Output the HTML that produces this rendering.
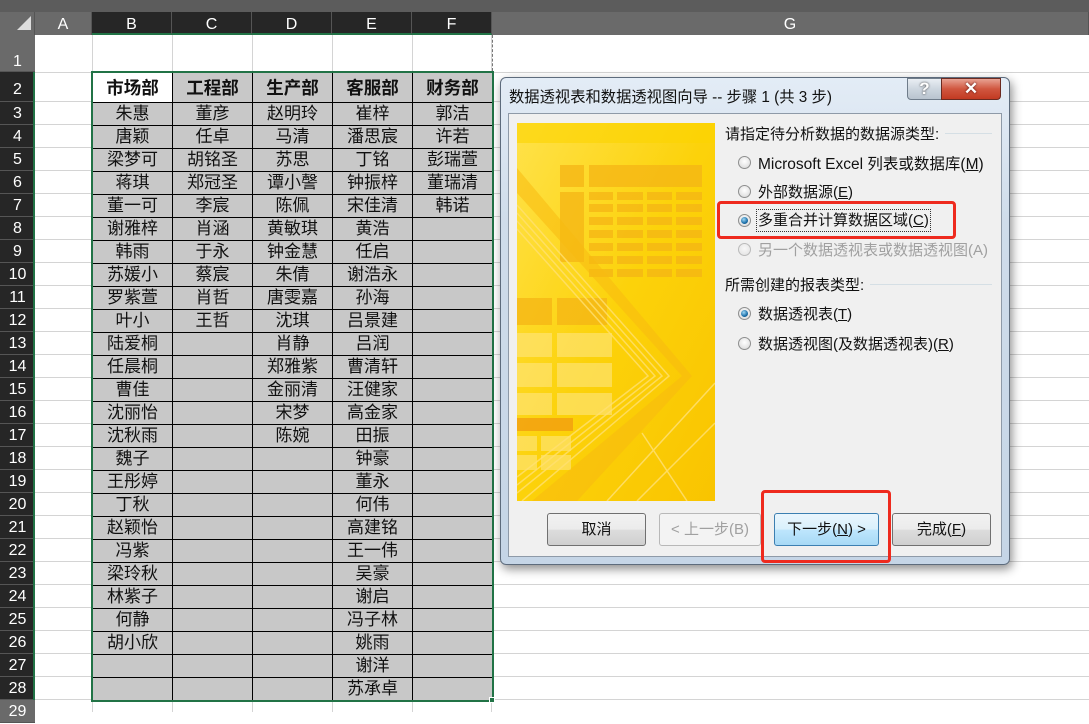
<!DOCTYPE html>
<html><head><meta charset="utf-8">
<style>
*{margin:0;padding:0;box-sizing:border-box}
body{width:1089px;height:712px;overflow:hidden;background:#fff;position:relative;font-family:"Liberation Sans","Noto Sans CJK SC",sans-serif}
.a{position:absolute}
.ch{position:absolute;top:12px;height:23px;color:#fff;font-size:16px;text-align:center;line-height:26px;border-right:1px solid #555}
.rh{position:absolute;left:0;width:35px;color:#fff;font-size:16px;text-align:center;border-bottom:1px solid #555}
.vl{position:absolute;top:35px;bottom:0;width:1px;background:#d4d4d4}
table.d{position:absolute;left:92px;top:72px;width:400px;border-collapse:collapse;table-layout:fixed;font-size:17px;font-family:"Liberation Sans","Noto Sans CJK SC",sans-serif}
table.d td{border:1px solid #000;background:#c8c8c8;text-align:center;height:23px;padding:0;line-height:20px;color:#111;overflow:hidden;white-space:nowrap}
table.d tr.h td{height:30px;font-weight:bold;font-size:17.5px;line-height:28px}
.dl{font-size:15px;color:#111;white-space:nowrap}
.rad{position:absolute;width:13px;height:13px;border-radius:50%;border:1px solid #8e8f8f;background:radial-gradient(circle at 50% 40%,#fff,#e6e6e6 60%,#cfcfcf)}
.rad.on::after{content:"";position:absolute;left:2px;top:2px;width:7px;height:7px;border-radius:50%;background:radial-gradient(circle at 40% 35%,#9fd8f5,#1a6ea8 60%,#0b3e66)}
.btn{position:absolute;top:513px;height:33px;border:1px solid #707070;border-radius:3px;background:linear-gradient(#f2f2f2,#ebebeb 50%,#dddddd 51%,#cfcfcf);font-size:15px;text-align:center;line-height:31px;color:#111}
</style></head><body>
<div class="a" style="left:0;top:0;width:1089px;height:12px;background:#5c5c5c"></div>
<div class="a" style="left:0;top:12px;width:1089px;height:23px;background:#6a6a6a"></div>
<div class="a" style="left:0;top:12px;width:35px;height:23px;background:#6a6a6a;border-right:1px solid #555"></div>
<div class="a" style="left:17px;top:16px;width:0;height:0;border-left:14px solid transparent;border-bottom:14px solid #ddd"></div>
<div class="ch" style="left:35px;width:57px;background:#6a6a6a">A</div>
<div class="ch" style="left:92px;width:80px;background:#262626;border-bottom:2px solid #217346">B</div>
<div class="ch" style="left:172px;width:80px;background:#262626;border-bottom:2px solid #217346">C</div>
<div class="ch" style="left:252px;width:80px;background:#262626;border-bottom:2px solid #217346">D</div>
<div class="ch" style="left:332px;width:80px;background:#262626;border-bottom:2px solid #217346">E</div>
<div class="ch" style="left:412px;width:80px;background:#262626;border-bottom:2px solid #217346">F</div>
<div class="ch" style="left:492px;width:597px;background:#6a6a6a">G</div>
<div class="a" style="left:35px;top:72px;width:1054px;height:1px;background:#d4d4d4"></div>
<div class="a" style="left:35px;top:101px;width:1054px;height:611px;background:repeating-linear-gradient(to bottom,#d4d4d4 0 1px,transparent 1px 23px)"></div>
<div class="vl" style="left:92px"></div><div class="vl" style="left:172px"></div><div class="vl" style="left:252px"></div><div class="vl" style="left:332px"></div><div class="vl" style="left:412px"></div><div class="vl" style="left:491px"></div>
<div class="a" style="left:0;top:35px;width:35px;height:677px;background:#6a6a6a"></div>
<div class="rh" style="top:35px;height:37px;background:#6a6a6a;line-height:54px">1</div>
<div class="rh" style="top:72px;height:30px;background:#262626;line-height:36px">2</div>
<div class="rh" style="top:102px;height:23px;background:#262626;line-height:24px">3</div>
<div class="rh" style="top:125px;height:23px;background:#262626;line-height:24px">4</div>
<div class="rh" style="top:148px;height:23px;background:#262626;line-height:24px">5</div>
<div class="rh" style="top:171px;height:23px;background:#262626;line-height:24px">6</div>
<div class="rh" style="top:194px;height:23px;background:#262626;line-height:24px">7</div>
<div class="rh" style="top:217px;height:23px;background:#262626;line-height:24px">8</div>
<div class="rh" style="top:240px;height:23px;background:#262626;line-height:24px">9</div>
<div class="rh" style="top:263px;height:23px;background:#262626;line-height:24px">10</div>
<div class="rh" style="top:286px;height:23px;background:#262626;line-height:24px">11</div>
<div class="rh" style="top:309px;height:23px;background:#262626;line-height:24px">12</div>
<div class="rh" style="top:332px;height:23px;background:#262626;line-height:24px">13</div>
<div class="rh" style="top:355px;height:23px;background:#262626;line-height:24px">14</div>
<div class="rh" style="top:378px;height:23px;background:#262626;line-height:24px">15</div>
<div class="rh" style="top:401px;height:23px;background:#262626;line-height:24px">16</div>
<div class="rh" style="top:424px;height:23px;background:#262626;line-height:24px">17</div>
<div class="rh" style="top:447px;height:23px;background:#262626;line-height:24px">18</div>
<div class="rh" style="top:470px;height:23px;background:#262626;line-height:24px">19</div>
<div class="rh" style="top:493px;height:23px;background:#262626;line-height:24px">20</div>
<div class="rh" style="top:516px;height:23px;background:#262626;line-height:24px">21</div>
<div class="rh" style="top:539px;height:23px;background:#262626;line-height:24px">22</div>
<div class="rh" style="top:562px;height:23px;background:#262626;line-height:24px">23</div>
<div class="rh" style="top:585px;height:23px;background:#262626;line-height:24px">24</div>
<div class="rh" style="top:608px;height:23px;background:#262626;line-height:24px">25</div>
<div class="rh" style="top:631px;height:23px;background:#262626;line-height:24px">26</div>
<div class="rh" style="top:654px;height:23px;background:#262626;line-height:24px">27</div>
<div class="rh" style="top:677px;height:23px;background:#262626;line-height:24px">28</div>
<div class="rh" style="top:700px;height:23px;background:#6a6a6a;line-height:24px">29</div>
<div class="a" style="left:33px;top:72px;width:2px;height:628px;background:#217346"></div>
<table class="d">
<colgroup><col style="width:80px"><col style="width:80px"><col style="width:80px"><col style="width:80px"><col style="width:80px"></colgroup>
<tr class="h"><td style="background:#fff">市场部</td><td>工程部</td><td>生产部</td><td>客服部</td><td>财务部</td></tr>
<tr><td>朱惠</td><td>董彦</td><td>赵明玲</td><td>崔梓</td><td>郭洁</td></tr>
<tr><td>唐颖</td><td>任卓</td><td>马清</td><td>潘思宸</td><td>许若</td></tr>
<tr><td>梁梦可</td><td>胡铭圣</td><td>苏思</td><td>丁铭</td><td>彭瑞萱</td></tr>
<tr><td>蒋琪</td><td>郑冠圣</td><td>谭小謦</td><td>钟振梓</td><td>董瑞清</td></tr>
<tr><td>董一可</td><td>李宸</td><td>陈佩</td><td>宋佳清</td><td>韩诺</td></tr>
<tr><td>谢雅梓</td><td>肖涵</td><td>黄敏琪</td><td>黄浩</td><td></td></tr>
<tr><td>韩雨</td><td>于永</td><td>钟金慧</td><td>任启</td><td></td></tr>
<tr><td>苏媛小</td><td>蔡宸</td><td>朱倩</td><td>谢浩永</td><td></td></tr>
<tr><td>罗紫萱</td><td>肖哲</td><td>唐雯嘉</td><td>孙海</td><td></td></tr>
<tr><td>叶小</td><td>王哲</td><td>沈琪</td><td>吕景建</td><td></td></tr>
<tr><td>陆爱桐</td><td></td><td>肖静</td><td>吕润</td><td></td></tr>
<tr><td>任晨桐</td><td></td><td>郑雅紫</td><td>曹清轩</td><td></td></tr>
<tr><td>曹佳</td><td></td><td>金丽清</td><td>汪健家</td><td></td></tr>
<tr><td>沈丽怡</td><td></td><td>宋梦</td><td>高金家</td><td></td></tr>
<tr><td>沈秋雨</td><td></td><td>陈婉</td><td>田振</td><td></td></tr>
<tr><td>魏子</td><td></td><td></td><td>钟豪</td><td></td></tr>
<tr><td>王彤婷</td><td></td><td></td><td>董永</td><td></td></tr>
<tr><td>丁秋</td><td></td><td></td><td>何伟</td><td></td></tr>
<tr><td>赵颖怡</td><td></td><td></td><td>高建铭</td><td></td></tr>
<tr><td>冯紫</td><td></td><td></td><td>王一伟</td><td></td></tr>
<tr><td>梁玲秋</td><td></td><td></td><td>吴豪</td><td></td></tr>
<tr><td>林紫子</td><td></td><td></td><td>谢启</td><td></td></tr>
<tr><td>何静</td><td></td><td></td><td>冯子林</td><td></td></tr>
<tr><td>胡小欣</td><td></td><td></td><td>姚雨</td><td></td></tr>
<tr><td></td><td></td><td></td><td>谢洋</td><td></td></tr>
<tr><td></td><td></td><td></td><td>苏承卓</td><td></td></tr>
</table>
<div class="a" style="left:91px;top:71px;width:403px;height:631px;border:2px solid #217346"></div>
<div class="a" style="left:489px;top:697px;width:6px;height:6px;background:#217346;border:1px solid #fff"></div>
<div class="a" style="left:492px;top:35px;width:0;height:36px;border-left:1px dashed #777"></div>

<div class="a" style="left:500px;top:77px;width:510px;height:488px;border:1px solid #5d6b7c;border-radius:6px;background:linear-gradient(#e3ecf6,#cfdcea 30%,#c5d5e6);box-shadow:2px 4px 10px rgba(0,0,0,.45)"></div>
<div class="a dl" style="left:509px;top:85px;font-size:15.3px;color:#111">数据透视表和数据透视图向导 -- 步骤 1 (共 3 步)</div>
<div class="a" style="left:907px;top:78px;width:35px;height:22px;border:1px solid #6f7c8a;border-radius:0 0 0 4px;background:linear-gradient(#e9eef3,#cdd6df 50%,#b9c4cf);color:#fff;font-weight:bold;font-size:17px;text-align:center;line-height:20px;text-shadow:0 0 2px #333">?</div>
<div class="a" style="left:941px;top:78px;width:60px;height:22px;border:1px solid #6b2a20;border-radius:0 0 4px 0;background:linear-gradient(#e8a293,#d0563f 50%,#c23a22);color:#fff;font-weight:bold;font-size:17px;text-align:center;line-height:20px;text-shadow:0 0 2px #400">✕</div>
<div class="a" style="left:508px;top:113px;width:494px;height:444px;background:#f0f0f0;border:1px solid #8e9aa8"></div>
<svg class="a" style="left:517px;top:123px" width="198" height="378" viewBox="0 0 198 378">
<defs><linearGradient id="g" x1="0" y1="0" x2="1" y2="1"><stop offset="0" stop-color="#ffe24a"/><stop offset=".5" stop-color="#fcd20a"/><stop offset="1" stop-color="#f9c400"/></linearGradient></defs>
<rect width="198" height="378" fill="url(#g)"/>
<rect x="0" y="0" width="198" height="20" fill="#fbd400" opacity=".6"/>
<g fill="#f5b515" opacity=".75">
<rect x="43" y="42" width="24" height="22"/><rect x="72" y="42" width="113" height="22"/><rect x="43" y="69" width="24" height="70"/>
<g><rect x="72" y="69" width="24" height="8"/><rect x="100" y="69" width="26" height="8"/><rect x="130" y="69" width="25" height="8"/><rect x="159" y="69" width="26" height="8"/></g>
<g transform="translate(0,12)"><rect x="72" y="69" width="24" height="8"/><rect x="100" y="69" width="26" height="8"/><rect x="130" y="69" width="25" height="8"/><rect x="159" y="69" width="26" height="8"/></g>
<g transform="translate(0,25)"><rect x="72" y="69" width="24" height="8"/><rect x="100" y="69" width="26" height="8"/><rect x="130" y="69" width="25" height="8"/><rect x="159" y="69" width="26" height="8"/></g>
<g transform="translate(0,38)"><rect x="72" y="69" width="24" height="8"/><rect x="100" y="69" width="26" height="8"/><rect x="130" y="69" width="25" height="8"/><rect x="159" y="69" width="26" height="8"/></g>
<g transform="translate(0,51)"><rect x="72" y="69" width="24" height="8"/><rect x="100" y="69" width="26" height="8"/><rect x="130" y="69" width="25" height="8"/><rect x="159" y="69" width="26" height="8"/></g>
<g transform="translate(0,64)"><rect x="72" y="69" width="24" height="8"/><rect x="100" y="69" width="26" height="8"/><rect x="130" y="69" width="25" height="8"/><rect x="159" y="69" width="26" height="8"/></g>
<g transform="translate(0,77)"><rect x="72" y="69" width="24" height="8"/><rect x="100" y="69" width="26" height="8"/><rect x="130" y="69" width="25" height="8"/><rect x="159" y="69" width="26" height="8"/></g>
<rect x="0" y="175" width="35" height="27"/><rect x="40" y="175" width="50" height="27"/>
<rect x="0" y="295" width="56" height="13" fill="#f29a10"/>
</g>
<g fill="#ffe680" opacity=".6"><rect x="0" y="210" width="35" height="24"/><rect x="40" y="210" width="55" height="24"/><rect x="0" y="240" width="35" height="24"/><rect x="40" y="240" width="55" height="24"/><rect x="0" y="270" width="35" height="22"/><rect x="40" y="270" width="55" height="22"/><rect x="0" y="313" width="20" height="15"/><rect x="24" y="313" width="30" height="15"/><rect x="0" y="332" width="20" height="15"/><rect x="24" y="332" width="30" height="15"/></g>
<path d="M0 70 L165 253 L15 378 L60 378 L175 253 L0 45 Z" fill="#f7b910" opacity=".55"/>
<path d="M0 82 L152 253 L5 378 M0 90 L145 253 L0 370 M0 98 L138 253 L0 362 M0 106 L131 253 L0 354" stroke="#ffe070" stroke-width="1.5" fill="none" opacity=".8"/>
<path d="M90 378 L198 260 M120 378 L198 300 M125 310 L170 378" stroke="#ffe48a" stroke-width="1.5" fill="none" opacity=".7"/>
</svg>
<div class="a dl" style="left:725px;top:123px">请指定待分析数据的数据源类型:</div>
<div class="a" style="left:945px;top:133px;width:47px;height:1px;background:#d5dfe5"></div>
<div class="rad" style="left:738px;top:156px"></div><div class="a dl" style="left:758px;top:152px;font-size:15.5px">Microsoft Excel 列表或数据库(<u>M</u>)</div>
<div class="rad" style="left:738px;top:185px"></div><div class="a dl" style="left:758px;top:181px">外部数据源(<u>E</u>)</div>
<div class="rad on" style="left:738px;top:214px"></div><div class="a dl" style="left:756px;top:209px;border:1px dotted #333;padding:0 1px;line-height:21px">多重合并计算数据区域(<u>C</u>)</div>
<div class="rad" style="left:738px;top:243px;opacity:.55"></div><div class="a dl" style="left:758px;top:239px;color:#a0a0a0">另一个数据透视表或数据透视图(A)</div>
<div class="a dl" style="left:725px;top:274px">所需创建的报表类型:</div>
<div class="a" style="left:870px;top:284px;width:122px;height:1px;background:#d5dfe5"></div>
<div class="rad on" style="left:738px;top:307px"></div><div class="a dl" style="left:758px;top:303px">数据透视表(<u>T</u>)</div>
<div class="rad" style="left:738px;top:337px"></div><div class="a dl" style="left:758px;top:333px">数据透视图(及数据透视表)(<u>R</u>)</div>
<div class="btn" style="left:547px;width:99px">取消</div>
<div class="btn" style="left:659px;width:102px;border-color:#b8b8b8;background:#f3f3f3;color:#a0a0a0">&lt; 上一步(B)</div>
<div class="btn" style="left:774px;width:105px;border-color:#3c7fb1;background:linear-gradient(#eaf6fd,#d9f0fc 50%,#bee6fd 51%,#a7d9f5)">下一步(<u>N</u>) &gt;</div>
<div class="btn" style="left:892px;width:99px">完成(<u>F</u>)</div>
<div class="a" style="left:717px;top:201px;width:239px;height:38px;border:3px solid #ee2a1e;border-radius:4px"></div>
<div class="a" style="left:761px;top:490px;width:130px;height:73px;border:3px solid #ee2a1e;border-radius:4px"></div>
</body></html>
